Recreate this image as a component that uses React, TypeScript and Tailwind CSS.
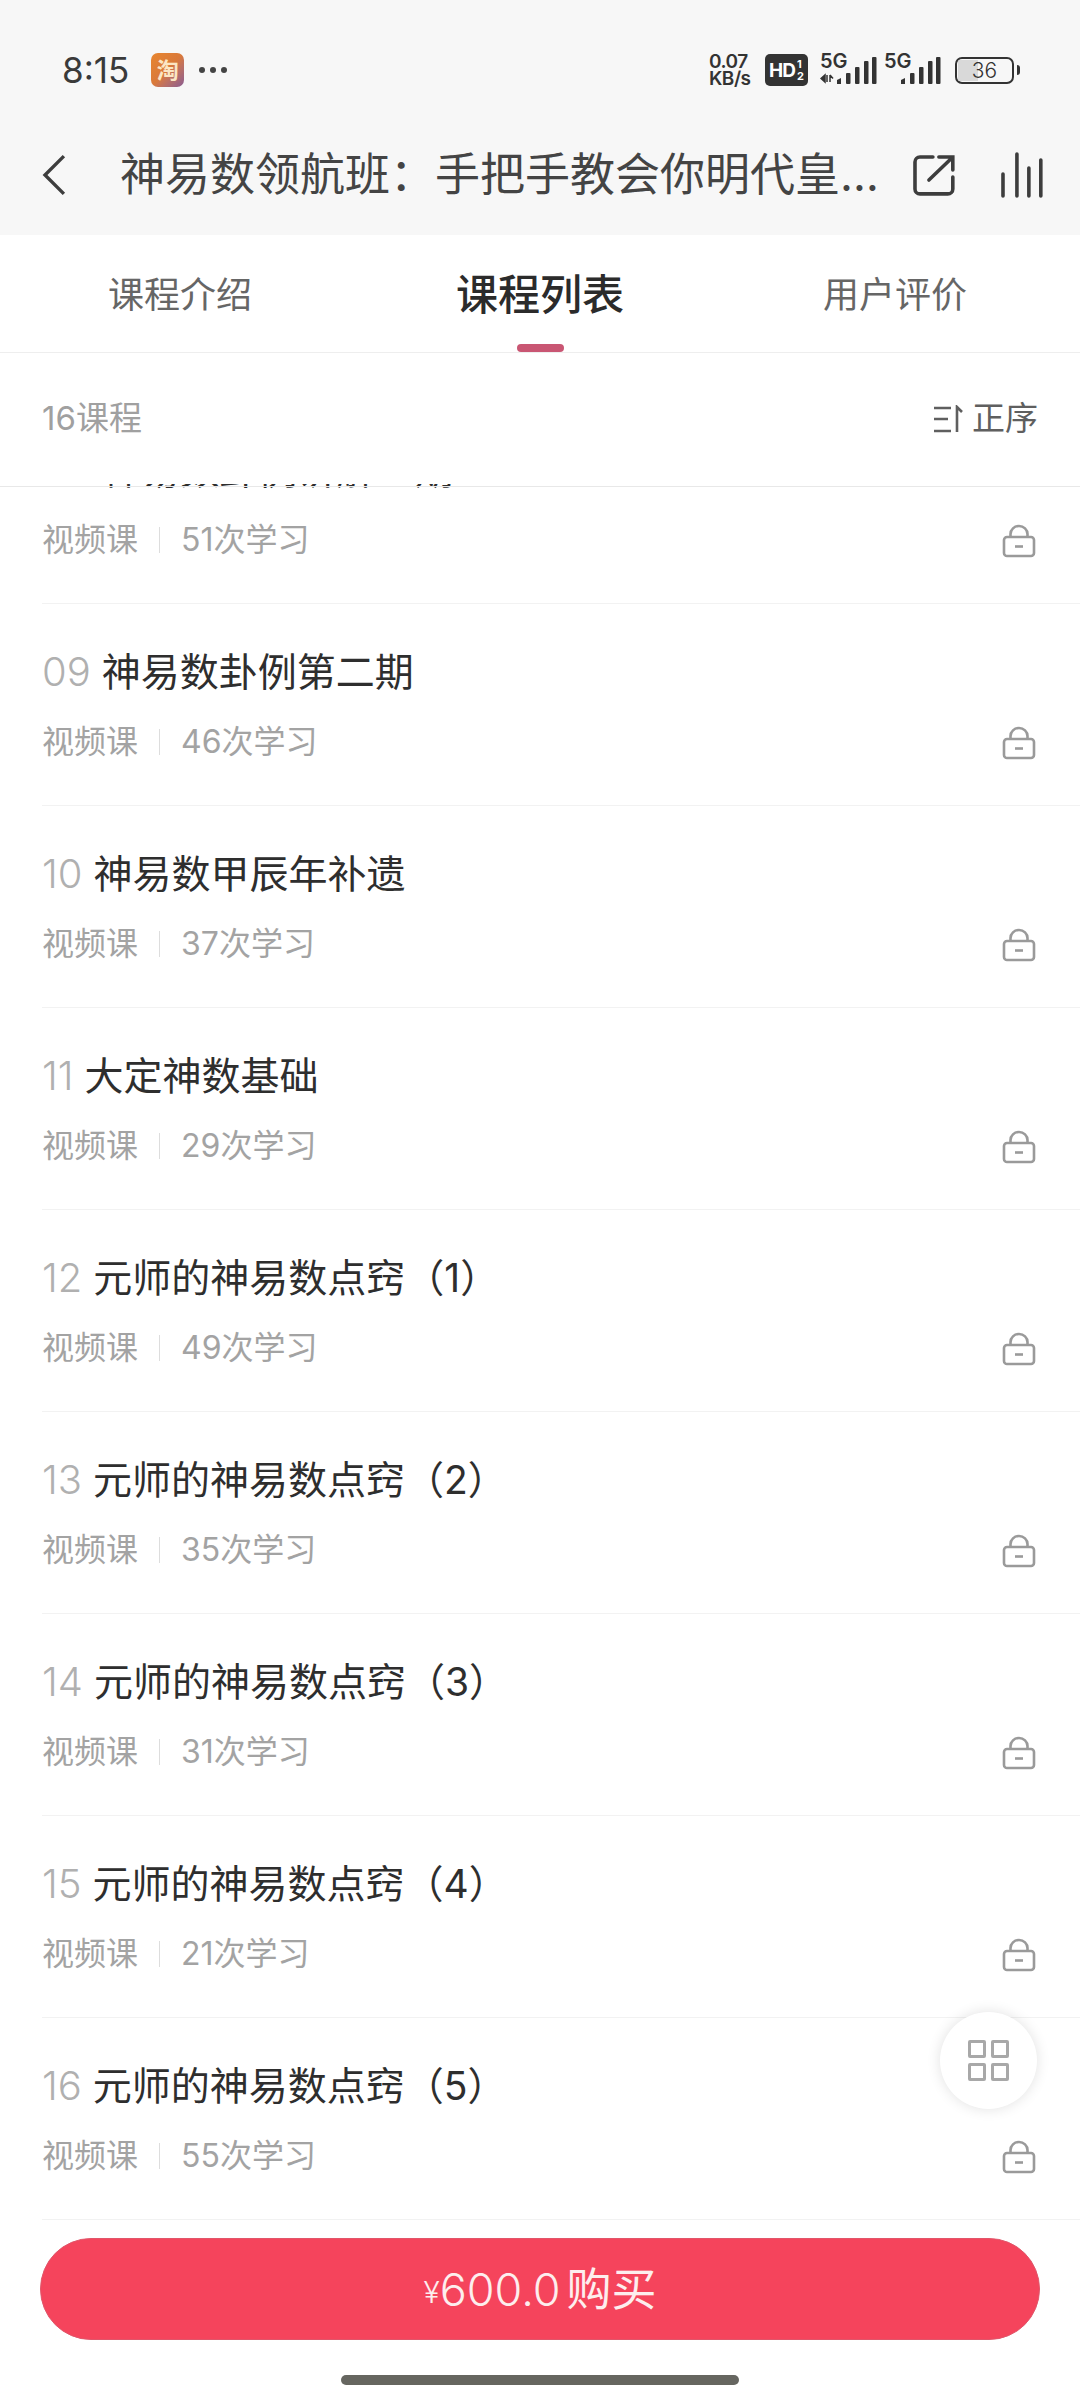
import React from 'react';

interface Lesson {
  no: string;
  title: string;
  count: number;
}

const lessons: Lesson[] = [
  { no: '08', title: '神易数卦例讲解一期', count: 51 },
  { no: '09', title: '神易数卦例第二期', count: 46 },
  { no: '10', title: '神易数甲辰年补遗', count: 37 },
  { no: '11', title: '大定神数基础', count: 29 },
  { no: '12', title: '元师的神易数点窍（1）', count: 49 },
  { no: '13', title: '元师的神易数点窍（2）', count: 35 },
  { no: '14', title: '元师的神易数点窍（3）', count: 31 },
  { no: '15', title: '元师的神易数点窍（4）', count: 21 },
  { no: '16', title: '元师的神易数点窍（5）', count: 55 },
];

const Signal: React.FC<{ arrows?: boolean }> = ({ arrows = false }) => (
  <div className="relative h-[32px] w-[57px]">
    <span className="absolute left-0 top-[-3px] text-[20px] font-semibold leading-[20px] text-[#333]">5G</span>
    <svg width="57" height="32" viewBox="0 0 57 32" className="absolute left-0 top-0">
      {arrows && <path d="M1 24.5 L5 21 V28 Z M7 21 V28 M10 21 V28 M10 21 L13 24.5" fill="#333" stroke="#333" strokeWidth="1.5" />}
      <path d="M17 30 V26 L21 24 V30 Z" fill="#333" />
      <rect x="26" y="19" width="4.5" height="11" rx="1" fill="#333" />
      <rect x="35" y="13" width="4.5" height="17" rx="1" fill="#333" />
      <rect x="44" y="7" width="4.5" height="23" rx="1" fill="#333" />
      <rect x="52" y="3" width="4.5" height="27" rx="1" fill="#333" />
    </svg>
  </div>
);

const LockIcon = () => (
  <svg width="34" height="34" viewBox="0 0 34 34" fill="none" stroke="#9a9a9a" strokeWidth="2.6">
    <path d="M8.5 13 V10 a8.5 8 0 0 1 17 0 V13" />
    <rect x="2" y="13" width="30" height="19" rx="3" />
    <path d="M13 22.5 H21" />
  </svg>
);

const StatusBar = () => (
  <div className="flex h-[110px] items-center pl-[62px] pr-[60px] pt-[30px]">
    <span className="text-[35px] leading-none text-[#3a3a3a]">8:15</span>
    <div className="ml-[22px] flex h-[34px] w-[33px] flex-col items-center justify-center overflow-hidden rounded-[7px] bg-gradient-to-br from-[#e8862e] via-[#d9793a] to-[#8a5a8f] text-[22px] font-bold leading-none text-[#fbe6c4]">
      淘
    </div>
    <div className="ml-[15px] flex gap-[5px]">
      <span className="h-[6px] w-[6px] rounded-full bg-[#444]" />
      <span className="h-[6px] w-[6px] rounded-full bg-[#444]" />
      <span className="h-[6px] w-[6px] rounded-full bg-[#444]" />
    </div>
    <div className="ml-auto flex items-center">
      <div className="w-[48px] whitespace-nowrap text-[19px] font-semibold leading-[17px] tracking-[-0.5px] text-[#333]">
        <div>0.07</div>
        <div>KB/s</div>
      </div>
      <div className="ml-[8px] flex h-[32px] w-[43px] items-center justify-center rounded-[5px] bg-[#333] text-white">
        <span className="text-[19px] font-bold leading-none tracking-[-1px]">HD</span>
        <span className="ml-[2px] flex flex-col text-[11px] font-bold leading-[12px]">
          <span>1</span>
          <span>2</span>
        </span>
      </div>
      <div className="ml-[12px]">
        <Signal arrows />
      </div>
      <div className="ml-[7px]">
        <Signal />
      </div>
      <div className="ml-[14px] flex items-center">
        <div className="relative flex h-[27px] w-[59px] items-center justify-center overflow-hidden rounded-[7px] border-[2.5px] border-[#333] text-[21px] font-light leading-none text-[#333]">
          <span className="absolute inset-y-[1px] left-[1px] w-[20px] bg-[#d9d9d9]" />
          <span className="relative">36</span>
        </div>
        <span className="ml-[3px] h-[10px] w-[3px] rounded-r-full bg-[#333]" />
      </div>
    </div>
  </div>
);

const NavBar = () => (
  <div className="flex h-[125px] items-center pl-[42px] pr-[36px] pt-[5px]">
    <svg width="24" height="42" viewBox="0 0 24 42" fill="none" stroke="#3d3d3d" strokeWidth="3.4">
      <path d="M22 2 L3 21 L22 40" />
    </svg>
    <h1 className="ml-[54px] w-[768px] truncate text-[45px] leading-[50px] text-[#444]">
      神易数领航班：手把手教会你明代皇极神数
    </h1>
    <svg width="44" height="44" viewBox="0 0 44 44" fill="none" stroke="#3d3d3d" strokeWidth="3.6" strokeLinecap="round" className="ml-[28px]">
      <path d="M21 4 H8 a5 5 0 0 0 -5 5 V36 a5 5 0 0 0 5 5 H36 a5 5 0 0 0 5 -5 V24" />
      <path d="M17 27 L40 5 M27 4 H41 V17" />
    </svg>
    <svg width="44" height="46" viewBox="0 0 44 46" fill="none" stroke="#3d3d3d" strokeWidth="3.6" strokeLinecap="round" className="ml-[44px]">
      <path d="M3 22 V44 M17 2 V44 M29 16 V44 M41 8 V44" />
    </svg>
  </div>
);

const Tabs = () => (
  <div className="grid h-[118px] grid-cols-3 border-b border-[#eeeeee] bg-white">
    <div className="pt-[38px] text-center text-[36px] leading-[44px] text-[#666]">课程介绍</div>
    <div className="flex flex-col items-center pt-[38px]">
      <span className="text-[42px] font-medium leading-[44px] text-[#2b2b2b]">课程列表</span>
      <span className="mt-auto h-[8px] w-[47px] rounded-full bg-[#c95673]" />
    </div>
    <div className="pr-[10px] pt-[38px] text-center text-[36px] leading-[44px] text-[#666]">用户评价</div>
  </div>
);

const SortBar = () => (
  <div className="relative z-10 flex h-[131px] items-center justify-between pl-[42px] pr-[42px]">
    <span className="text-[33px] leading-none text-[#a0a0a0]">16课程</span>
    <div className="flex items-center gap-[9px] text-[33px] leading-none text-[#5f5f5f]">
      <svg width="30" height="28" viewBox="0 0 30 28" fill="none" stroke="#5f5f5f" strokeWidth="2.6">
        <path d="M1 3 H18 M1 14 H15 M1 26 H18 M24 27 V2 L29 7" />
      </svg>
      <span>正序</span>
    </div>
  </div>
);

const LessonRow: React.FC<{ lesson: Lesson }> = ({ lesson }) => (
  <li className="ml-[42px] h-[202px] border-b border-[#f2f2f2] pt-[44px]">
    <div className="flex h-[48px] items-center gap-[11px] whitespace-nowrap leading-[48px]">
      <span className="text-[40px] font-light text-[#b0b0b0]">{lesson.no}</span>
      <span className="text-[39px] text-[#2e2e2e]">{lesson.title}</span>
    </div>
    <div className="mt-[26px] flex h-[40px] items-center pr-[44px] text-[32px] leading-[40px] text-[#a3a3a3]">
      <span>视频课</span>
      <span className="ml-[21px] h-[26px] w-px bg-[#dddddd]" />
      <span className="ml-[21px]">{lesson.count}次学习</span>
      <span className="ml-auto mt-[2px]">
        <LockIcon />
      </span>
    </div>
  </li>
);

export default function App() {
  return (
    <div className="relative flex h-[2400px] w-[1080px] flex-col overflow-hidden bg-white font-['Inter','Noto_Sans_CJK_SC',sans-serif]">
      <header className="h-[235px] bg-[#f7f7f7]">
        <StatusBar />
        <NavBar />
      </header>
      <Tabs />
      <SortBar />
      <div className="relative min-h-0 flex-1 overflow-hidden">
        <span className="absolute inset-x-0 top-[2px] h-px bg-[#e8e8e8]" />
        <ul className="mt-[-82px]">
          {lessons.map((lesson) => (
            <LessonRow key={lesson.no} lesson={lesson} />
          ))}
        </ul>
      </div>
      <footer className="h-[180px] shrink-0 px-[40px] pt-[18px]">
        <button className="flex h-[102px] w-full items-center justify-center rounded-full border border-[#e0566a] bg-[#f5445c] font-light leading-none text-[#fdeeee]">
          <span className="mt-[6px] text-[30px]">¥</span>
          <span className="text-[45px]">600.0</span>
          <span className="ml-[6px] text-[45px] font-normal">购买</span>
        </button>
        <div className="mx-auto mt-[35px] h-[10px] w-[398px] rounded-full bg-[#666660]" />
      </footer>
      <div className="absolute left-[940px] top-[2012px] flex h-[97px] w-[97px] items-center justify-center rounded-full bg-white shadow-[0_0_14px_rgba(0,0,0,0.12)]">
        <div className="grid grid-cols-2 gap-[5px]">
          <span className="h-[18px] w-[18px] rounded-[2px] border-[3px] border-[#a8a8a8]" />
          <span className="h-[18px] w-[18px] rounded-[2px] border-[3px] border-[#a8a8a8]" />
          <span className="h-[18px] w-[18px] rounded-[2px] border-[3px] border-[#a8a8a8]" />
          <span className="h-[18px] w-[18px] rounded-[2px] border-[3px] border-[#a8a8a8]" />
        </div>
      </div>
    </div>
  );
}
